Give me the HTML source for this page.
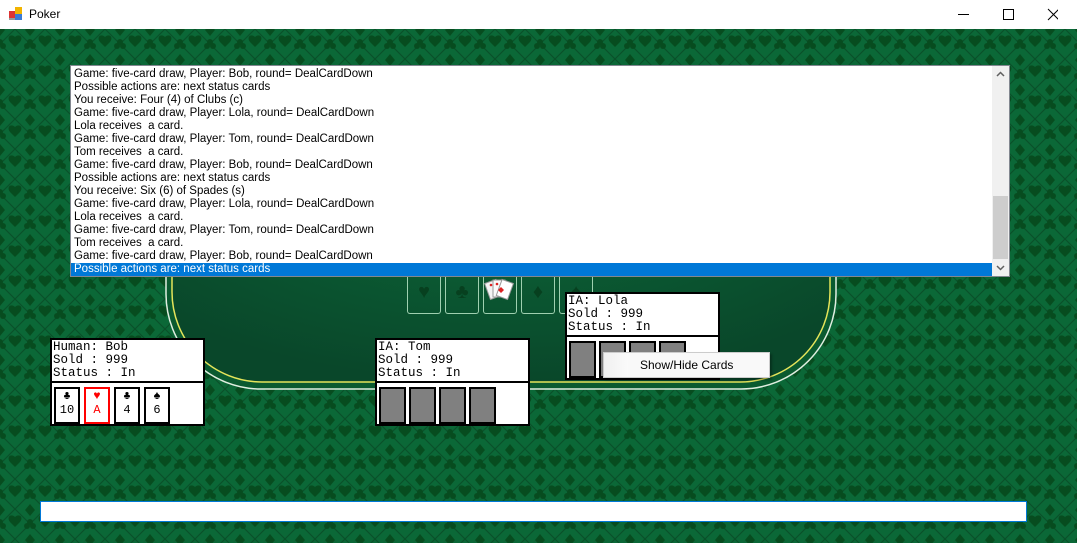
<!DOCTYPE html>
<html><head><meta charset="utf-8"><style>
body{margin:0;width:1077px;height:543px;overflow:hidden;position:relative;font-family:"Liberation Sans",sans-serif;background:#fff}
.title{position:absolute;left:0;top:0;width:1077px;height:29px;background:#fff}
.bg{position:absolute;left:0;top:29px;width:1077px;height:514px}
.lb{position:absolute;left:70px;top:65px;width:938px;height:210px;background:#fff;border:1px solid #828790;font-size:11.5px;line-height:13px;color:#000;overflow:hidden;box-sizing:content-box}
.lb .ln{padding-left:3px;height:13px;white-space:nowrap}
.lines{padding-top:2px}
.sel{background:#0078d7;color:#fff}
.sb{position:absolute;right:0;top:0;width:17px;height:210px;background:#f0f0f0}
.thumb{position:absolute;left:1px;top:130px;width:15px;height:63px;background:#cdcdcd}
.panel{position:absolute;width:151px;height:84px;border:2px solid #000;background:#fff;font-family:"Liberation Mono",monospace;font-size:12.5px;line-height:13px}
.info{border-bottom:2px solid #000;padding:1px 0 0 1px;box-sizing:border-box;height:43px}
.cards{position:relative}
.c{position:absolute;top:4px;width:22px;height:33px;border:2px solid #000;background:#fff;text-align:center;font-size:12px;line-height:14px}
.g{position:absolute;top:4px;width:23px;height:33px;border:2px solid #000;background:#808080}
.cc{position:absolute;top:275px;width:32px;height:38px;border:1px solid #9fd0b0;border-top:none;border-radius:0 0 3px 3px;color:#07401f;text-align:center;font-size:20px;line-height:34px}
</style></head><body>
<div class="title">
<svg style="position:absolute;left:9px;top:7px" width="14" height="14"><rect x="0" y="4" width="6" height="7" fill="#d33"/><rect x="6" y="0" width="7" height="7" fill="#f2b400"/><rect x="6" y="7" width="7" height="6" fill="#3a7bd5"/><rect x="0" y="11" width="6" height="2" fill="#999"/></svg>
<span style="position:absolute;left:29px;top:7px;font-size:12px">Poker</span>
<svg style="position:absolute;left:958px;top:8px" width="100" height="14"><line x1="0" y1="6.5" x2="11" y2="6.5" stroke="#000"/><rect x="45.5" y="1.5" width="10" height="10" fill="none" stroke="#000"/><path d="M90 1L101 12M101 1L90 12" stroke="#000"/></svg>
</div>
<svg class="bg" width="1077" height="514">
<defs><pattern id="p" width="30" height="30" patternUnits="userSpaceOnUse">
<rect width="30" height="30" fill="#0b6837"/>
<path d="M0 15L15 0L30 15L15 30Z" fill="none" stroke="#0a5029" stroke-width="1.2"/>
<path d="M15 8c-4-4-9 0-5 5l5 5l5-5c4-5-1-9-5-5z" fill="#074c1f"/>
<path d="M0 -5l5 6l-5 6l-5-6z M30 -5l5 6l-5 6l-5-6z M0 25l5 6l-5 6l-5-6z M30 25l5 6l-5 6l-5-6z" fill="#074c1f"/>
<circle cx="0" cy="13" r="3" fill="#074c1f"/><circle cx="-3" cy="17" r="3" fill="#074c1f"/><circle cx="3" cy="17" r="3" fill="#074c1f"/>
<circle cx="30" cy="13" r="3" fill="#074c1f"/><circle cx="27" cy="17" r="3" fill="#074c1f"/><circle cx="33" cy="17" r="3" fill="#074c1f"/>
</pattern>
<radialGradient id="f" cx="0.5" cy="0.3" r="0.7"><stop offset="0" stop-color="#0d6a3a"/><stop offset="1" stop-color="#09472a"/></radialGradient></defs>
<rect width="1077" height="514" fill="url(#p)"/>
<rect x="166" y="50" width="670" height="310" rx="95" fill="#0a5a30" stroke="#dfeee0" stroke-width="1.5"/>
<rect x="172" y="54" width="658" height="299" rx="90" fill="url(#f)" stroke="#e4e45a" stroke-width="1.5"/>
</svg>
<div class="cc" style="left:407px">♥</div>
<div class="cc" style="left:445px">♣</div>
<div class="cc" style="left:483px"><svg width="32" height="36" style="position:absolute;left:0;top:0"><rect x="3" y="6" width="12" height="17" fill="#f4f4f4" stroke="#999" transform="rotate(-20 9 14)"/><rect x="9" y="5" width="12" height="17" fill="#fafafa" stroke="#999"/><rect x="15" y="6" width="12" height="17" fill="#fff" stroke="#999" transform="rotate(20 21 14)"/><path d="M17 12l3 3l-3 3l-3-3z" fill="#d22"/><circle cx="7" cy="10" r="1.3" fill="#d22"/><circle cx="13" cy="9" r="1.3" fill="#d22"/></svg></div>
<div class="cc" style="left:521px">♦</div>
<div class="cc" style="left:559px">♠</div>
<div class="lb"><div class="lines">
<div class="ln">Game: five-card draw, Player: Bob, round= DealCardDown</div>
<div class="ln">Possible actions are: next status cards</div>
<div class="ln">You receive: Four (4) of Clubs (c)</div>
<div class="ln">Game: five-card draw, Player: Lola, round= DealCardDown</div>
<div class="ln">Lola receives &nbsp;a card.</div>
<div class="ln">Game: five-card draw, Player: Tom, round= DealCardDown</div>
<div class="ln">Tom receives &nbsp;a card.</div>
<div class="ln">Game: five-card draw, Player: Bob, round= DealCardDown</div>
<div class="ln">Possible actions are: next status cards</div>
<div class="ln">You receive: Six (6) of Spades (s)</div>
<div class="ln">Game: five-card draw, Player: Lola, round= DealCardDown</div>
<div class="ln">Lola receives &nbsp;a card.</div>
<div class="ln">Game: five-card draw, Player: Tom, round= DealCardDown</div>
<div class="ln">Tom receives &nbsp;a card.</div>
<div class="ln">Game: five-card draw, Player: Bob, round= DealCardDown</div>
<div class="ln sel" style="margin-right:17px">Possible actions are: next status cards</div></div>
<div class="sb"><div class="thumb"></div>
<svg style="position:absolute;left:4px;top:5px" width="9" height="6"><path d="M1 5L4.5 1.5L8 5" fill="none" stroke="#606060" stroke-width="1.5"/></svg>
<svg style="position:absolute;left:4px;top:199px" width="9" height="6"><path d="M1 1L4.5 4.5L8 1" fill="none" stroke="#606060" stroke-width="1.5"/></svg></div>
</div>
<div class="panel" style="left:50px;top:338px"><div class="info">Human: Bob<br>Sold : 999<br>Status : In</div>
<div class="cards"><div class="c" style="left:2px">♣<br>10</div><div class="c" style="left:32px;border-color:#f00;color:#f00">♥<br>A</div><div class="c" style="left:62px">♣<br>4</div><div class="c" style="left:92px">♠<br>6</div></div></div>
<div class="panel" style="left:375px;top:338px"><div class="info">IA: Tom<br>Sold : 999<br>Status : In</div>
<div class="cards"><div class="g" style="left:2px"></div><div class="g" style="left:32px"></div><div class="g" style="left:62px"></div><div class="g" style="left:92px"></div></div></div>
<div class="panel" style="left:565px;top:292px"><div class="info">IA: Lola<br>Sold : 999<br>Status : In</div>
<div class="cards"><div class="g" style="left:2px"></div><div class="g" style="left:32px"></div><div class="g" style="left:62px"></div><div class="g" style="left:92px"></div></div></div>
<div style="position:absolute;left:603px;top:352px;width:165px;height:24px;background:#f9f9f9;border:1px solid #ccc;box-shadow:2px 2px 2px rgba(0,0,0,.3);font-size:12px;line-height:24px"><div style="position:absolute;left:0;top:0;width:24px;height:24px;background:linear-gradient(90deg,#f0f0f0,#fafafa)"></div><span style="position:relative;padding-left:36px">Show/Hide Cards</span></div>
<div style="position:absolute;left:40px;top:501px;width:985px;height:19px;background:#fff;border:1px solid #0078d7"></div>
</body></html>
